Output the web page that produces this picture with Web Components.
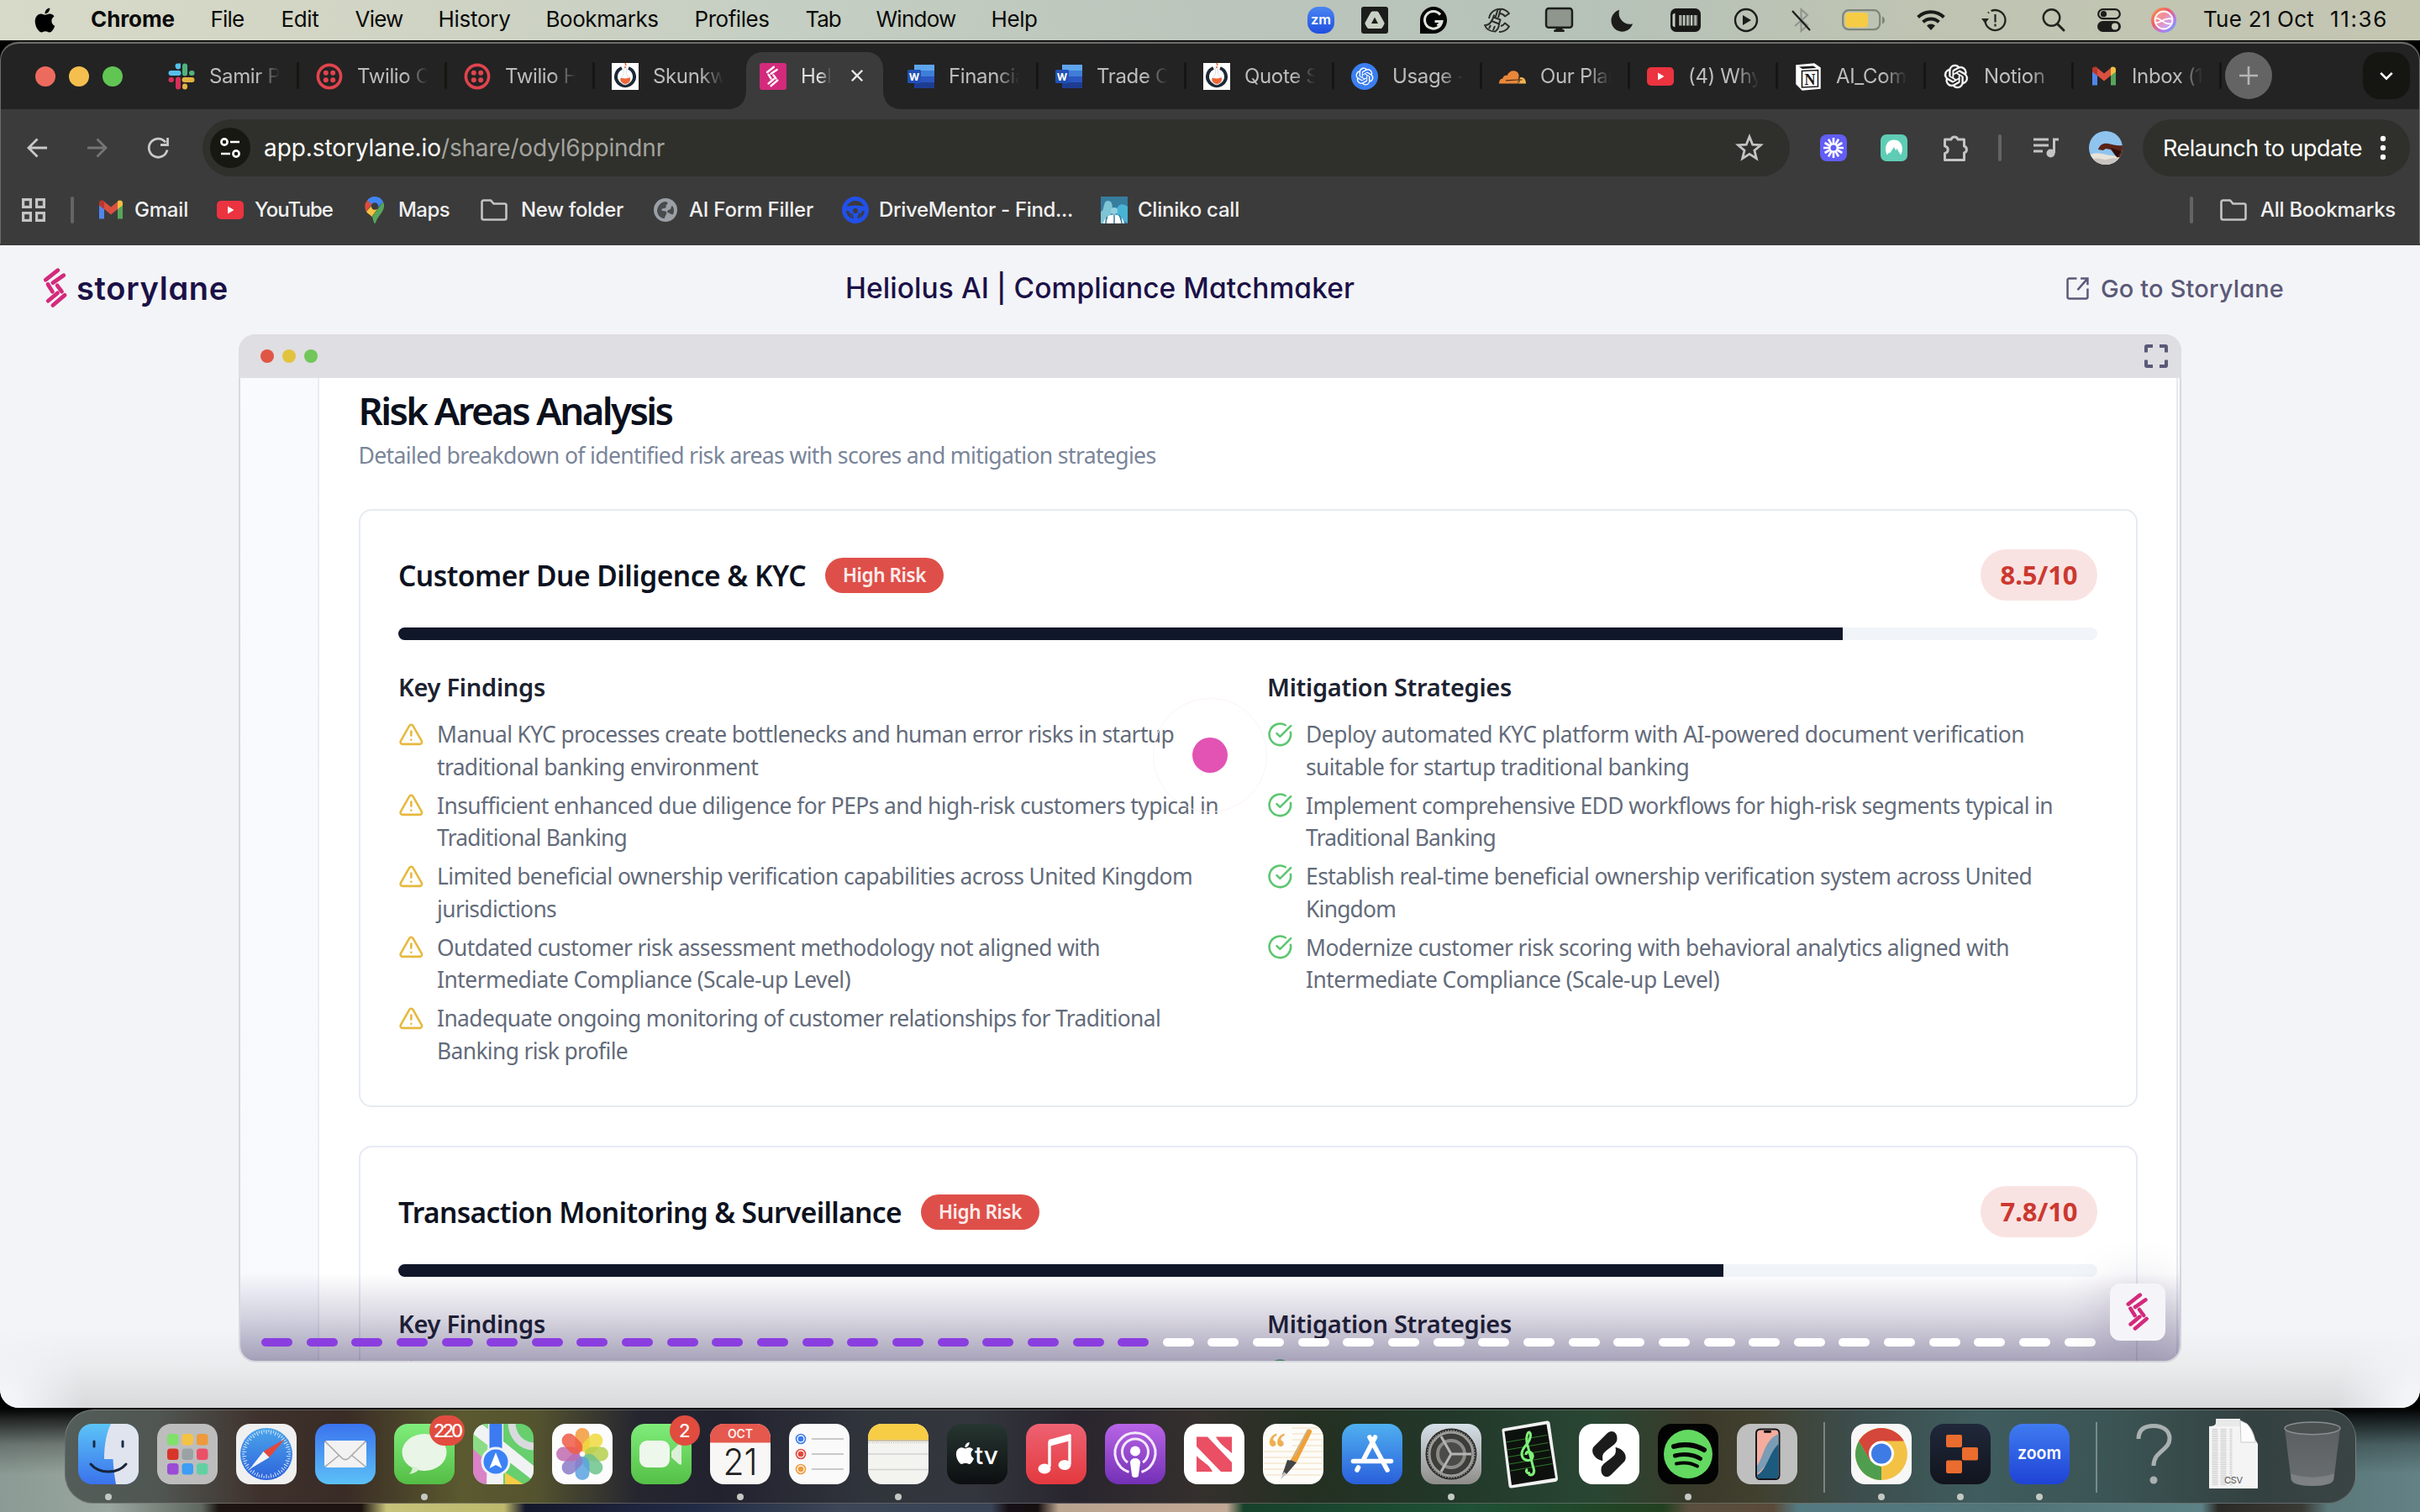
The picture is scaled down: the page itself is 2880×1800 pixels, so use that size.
<!DOCTYPE html>
<html lang="en">
<head>
<meta charset="utf-8">
<title>Heliolus AI | Compliance Matchmaker</title>
<style>
html,body{margin:0;padding:0;width:2880px;height:1800px;overflow:hidden;background:#0b0c0b}
</style>
</head>
<body>
<mac-desktop></mac-desktop>
<script>
const rr=(fill,extra='')=>`<rect x="0" y="0" width="72" height="72" rx="16.5" fill="${fill}" ${extra}/>`;
const lg=(id,a,b)=>`<defs><linearGradient id="${id}" x1="0" y1="0" x2="0" y2="1"><stop offset="0" stop-color="${a}"/><stop offset="1" stop-color="${b}"/></linearGradient></defs>`;
const APPLE='M12.152 6.896c-.948 0-2.415-1.078-3.96-1.04-2.04.027-3.91 1.183-4.961 3.014-2.117 3.675-.546 9.103 1.519 12.09 1.013 1.454 2.208 3.09 3.792 3.039 1.52-.065 2.09-.987 3.935-.987 1.831 0 2.35.987 3.96.948 1.637-.026 2.676-1.48 3.676-2.948 1.156-1.688 1.636-3.325 1.662-3.415-.039-.013-3.182-1.221-3.22-4.857-.026-3.04 2.48-4.494 2.597-4.559-1.429-2.09-3.623-2.324-4.39-2.376-2-.156-3.675 1.09-4.61 1.09zM15.53 3.83c.843-1.012 1.4-2.427 1.245-3.83-1.207.052-2.662.805-3.532 1.818-.78.896-1.454 2.338-1.273 3.714 1.338.104 2.715-.688 3.559-1.701';
const KNOT='M22.2819 9.8211a5.9847 5.9847 0 0 0-.5157-4.9108 6.0462 6.0462 0 0 0-6.5098-2.9A6.0651 6.0651 0 0 0 4.9807 4.1818a5.9847 5.9847 0 0 0-3.9977 2.9 6.0462 6.0462 0 0 0 .7427 7.0966 5.98 5.98 0 0 0 .511 4.9107 6.051 6.051 0 0 0 6.5146 2.9001A5.9847 5.9847 0 0 0 13.2599 24a6.0557 6.0557 0 0 0 5.7718-4.2058 5.9894 5.9894 0 0 0 3.9977-2.9001 6.0557 6.0557 0 0 0-.7475-7.0729zm-9.022 12.6081a4.4755 4.4755 0 0 1-2.8764-1.0408l.1419-.0804 4.7783-2.7582a.7948.7948 0 0 0 .3927-.6813v-6.7369l2.02 1.1686a.071.071 0 0 1 .038.052v5.5826a4.504 4.504 0 0 1-4.4945 4.4944zm-9.6607-4.1254a4.4708 4.4708 0 0 1-.5346-3.0137l.142.0852 4.783 2.7582a.7712.7712 0 0 0 .7806 0l5.8428-3.3685v2.3324a.0804.0804 0 0 1-.0332.0615L9.74 19.9502a4.4992 4.4992 0 0 1-6.1408-1.6464zM2.3408 7.8956a4.485 4.485 0 0 1 2.3655-1.9728V11.6a.7664.7664 0 0 0 .3879.6765l5.8144 3.3543-2.0201 1.1685a.0757.0757 0 0 1-.071 0l-4.8303-2.7865A4.504 4.504 0 0 1 2.3408 7.872zm16.5963 3.8558L13.1038 8.364 15.1192 7.2a.0757.0757 0 0 1 .071 0l4.8303 2.7913a4.4944 4.4944 0 0 1-.6765 8.1042v-5.6772a.79.79 0 0 0-.407-.667zm2.0107-3.0231l-.142-.0852-4.7735-2.7818a.7759.7759 0 0 0-.7854 0L9.409 9.2297V6.8974a.0662.0662 0 0 1 .0284-.0615l4.8303-2.7866a4.4992 4.4992 0 0 1 6.6802 4.66zM8.3065 12.863l-2.02-1.1638a.0804.0804 0 0 1-.038-.0567V6.0742a4.4992 4.4992 0 0 1 7.3757-3.4537l-.142.0805L8.704 5.459a.7948.7948 0 0 0-.3927.6813zm1.0976-2.3654l2.602-1.4998 2.6069 1.4998v2.9994l-2.5974 1.4997-2.6067-1.4997Z';
const slStrokes='<path d="M16.8 2.6 2.8 13.6M23.4 8.4 11 17M5.4 18.6l5.2 8.4M16 20l5.2 7M16.4 28.6 5.6 37.6M24.6 31 11 42.6"/>';
const ring=(n,f)=>Array.from({length:n},(_,i)=>f(i*360/n,i)).join('');

/* name: [viewBox, markup] */
const ICONS={
 apple:['0 0 24 24',`<path d="${APPLE}" fill="#000"/>`],
 zm:['0 0 32 32',`${lg('g','#4a86f2','#1f4fe0')}<rect width="32" height="32" rx="13" fill="url(#g)"/><text x="16" y="21" text-anchor="middle" font-family="Inter" font-weight="600" font-size="15.5" textLength="24" lengthAdjust="spacingAndGlyphs" fill="#fff">zm</text>`],
 drive:['0 0 32 32','<rect width="32" height="32" rx="3" fill="#1c1d1b"/><path fill-rule="evenodd" d="M13 5.500h6l1.500 1L27.500 19v1.500L25 25l-1.500 1h-15L7 25l-2.500-4.500V19L11.500 6.500zM16 12.500l-4 7.500h8z" fill="#c9d1c6"/>'],
 gram:['0 0 32 32','<path d="M16 0a16 16 0 1 1 0 32H0V16A16 16 0 0 1 16 0z" fill="#050505"/><path d="M24 9.500A10.300 10.300 0 1 0 26 17.500h-8.500" fill="none" stroke="#dfe4dc" stroke-width="3"/><path d="M20.500 22.500l5.500-5" fill="none" stroke="#dfe4dc" stroke-width="2.500"/>'],
 squig:['0 0 32 32','<g fill="none" stroke="#2b2d2a" stroke-width="2" stroke-linejoin="round"><path d="M6 14A13.500 13.500 0 0 1 30 8l-5 3.500a8 8 0 0 0-6-3.500"/><path d="M12.500 9.500A8 8 0 0 0 11 13"/><path d="M20 2.500l-3 10.500"/><path d="M17 2l-3.500 11"/><path d="M11.500 12.500l8 3-1.500 5-9-3.500z"/><path d="M9 17c-2 4-5 5-8 5 2 5 6 7.500 12.500 7.500 3-2.500 4.500-5.500 4.500-9"/><path d="M8 22l-2 4M13 23l-2 5"/><path d="M20 23a8 8 0 0 0 5-3.500l5 4A14 14 0 0 1 18 30"/></g>'],
 display:['0 0 32 32','<rect x="1" y="3" width="30" height="22" rx="3" fill="#8f968e" stroke="#1d1f1c" stroke-width="2.400"/><path d="M12 25h8v2.500h2V30H10v-2.500h2z" fill="#1d1f1c"/>'],
 moon:['0 0 32 32','<path d="M13 3A14 14 0 1 0 30 20.500 14 14 0 0 1 13 3z" fill="#1c1d1b"/>'],
 ram:['0 0 36 28','<rect width="36" height="28" rx="6.500" fill="#181917"/><path d="M2.500 7.500q2-2.500 3-1.500v16q-1 1-3-1.500z" fill="#c6cdc2"/><g stroke="#c6cdc2" stroke-width="2.200"><path d="M11.500 8v12.500M16 8v12.500M20.500 8v12.500M25 8v12.500M29.500 8v12.500"/></g><g stroke="#7d827a" stroke-width="1"><path d="M13.500 8v12.500M18 8v12.500M22.500 8v12.500M27 8v12.500M31.500 8v12.500"/></g>'],
 play:['0 0 32 32','<circle cx="16" cy="16" r="13" fill="none" stroke="#1c1d1b" stroke-width="2.400"/><path d="M12 10v12l10-6z" fill="#1c1d1b"/>'],
 bt:['0 0 32 32','<path d="M8 9l15 13-7.500 7V3L23 10 8 23" fill="none" stroke="#8d948b" stroke-width="2"/><path d="M5 5l21 23" stroke="#1c1d1b" stroke-width="2.200"/>'],
 batt:['0 0 52 26','<rect x="1.200" y="1.200" width="44" height="23" rx="7" fill="none" stroke="#7d8478" stroke-width="2.200"/><rect x="4" y="4" width="27" height="17.500" rx="4" fill="#f7cc45"/><path d="M48 8.500c4 1.500 4 7.500 0 9z" fill="#7d8478"/>'],
 wifi:['0 0 34 26','<g fill="none" stroke="#1a1b19" stroke-width="4"><path d="M1.600 9.500a22 22 0 0 1 30.800 0"/><path d="M7.600 15.200a13.500 13.500 0 0 1 18.800 0"/></g><path d="M17 25l-5-5.500a7.500 7.500 0 0 1 10 0z" fill="#1a1b19"/>'],
 tm:['0 0 32 32','<path d="M5.500 17A12 12 0 1 0 9 7.500" fill="none" stroke="#23241f" stroke-width="2.300" stroke-dasharray="60 3 3 3"/><path d="M1 14h9l-4.500 6z" fill="#23241f"/><path d="M17.500 9v9.500M17.500 20.500v3" stroke="#23241f" stroke-width="2.200"/>'],
 search:['0 0 32 32','<circle cx="13.500" cy="13" r="9.800" fill="none" stroke="#23241f" stroke-width="2.400"/><path d="M20.500 20.500L28 28" stroke="#23241f" stroke-width="3" stroke-linecap="round"/>'],
 cc:['0 0 28 28','<rect x="1.200" y="1.200" width="25.600" height="11" rx="5.500" fill="none" stroke="#1c1d1b" stroke-width="2.200"/><circle cx="7.500" cy="6.700" r="3.600" fill="#1c1d1b"/><rect y="15" width="28" height="13" rx="6.500" fill="#1c1d1b"/><circle cx="21" cy="21.500" r="4" fill="#c6cab8"/>'],
 siri:['0 0 30 30','<defs><linearGradient id="s" x1="0" y1="0" x2="1" y2="1"><stop offset="0" stop-color="#f6a13a"/><stop offset=".4" stop-color="#ee5a6f"/><stop offset=".7" stop-color="#b47cf0"/><stop offset="1" stop-color="#3fb4f5"/></linearGradient></defs><circle cx="15" cy="15" r="15" fill="url(#s)"/><circle cx="15" cy="15" r="10.500" fill="#fff" fill-opacity=".3" stroke="#fff" stroke-width="1.800"/><path d="M5 18c5 2 12-8 20-4M5 13c5-3 10 9 19 6" fill="none" stroke="#fff" stroke-width="1.800"/>'],
 slack:['0 0 32 32','<g stroke-width="6" stroke-linecap="round"><path d="M3.500 12h9M11.500 3.500h.5v1" stroke="#56c0ec"/><path d="M20 3.500v9M28.500 12h-.5" stroke="#4fb37f"/><path d="M19.500 20h9M20 28.500v-1" stroke="#e3b341"/><path d="M12 19.500v9M3.500 20h.5" stroke="#d72f5c"/></g>'],
 twilio:['0 0 32 32','<circle cx="16" cy="16" r="13.600" fill="none" stroke="#e0444e" stroke-width="3.600"/><g fill="#e0444e"><circle cx="11.800" cy="11.800" r="3"/><circle cx="20.200" cy="11.800" r="3"/><circle cx="11.800" cy="20.200" r="3"/><circle cx="20.200" cy="20.200" r="3"/></g>'],
 skunk:['0 0 32 32','<rect width="32" height="32" fill="#fff"/><path d="M12 6a11 11 0 1 0 8 0" fill="none" stroke="#1c2836" stroke-width="4"/><path d="M14.500 6h3v7l3.500 5a5.500 5.500 0 1 1-10 0l3.500-5z" fill="#fff" stroke="#dfe2e6"/><path d="M10.300 18.500c3-1.500 6 1.500 11.400-1.500a5.900 5.900 0 1 1-11.400 1.500z" fill="#ec6737"/><path d="M16 0l1 3M15 5h2" stroke="#ec6737" stroke-width="1.500"/>'],
 story:['0 0 32 32',`<rect width="32" height="32" rx="3" fill="#d42a7c"/><g transform="translate(7.500 3.300) scale(.56)" stroke="#fff" stroke-width="4.400" stroke-linecap="round" fill="none">${slStrokes}</g>`],
 word:['0 0 32 32','<path d="M8 2h24v8H8z" fill="#5ea5ec"/><path d="M8 9h24v7H8z" fill="#3f7ed8"/><path d="M8 16h24v7H8z" fill="#2a56c0"/><path d="M8 23h24v7H8z" fill="#1d3c91"/><rect y="8" width="16" height="16" rx="1.500" fill="#2150b5"/><text x="8" y="20.500" text-anchor="middle" font-family="Inter" font-weight="700" font-size="12" fill="#fff">W</text>'],
 usage:['0 0 32 32',`<circle cx="16" cy="16" r="16" fill="#3b7ef0"/><path transform="translate(5.500 5.500) scale(.875)" d="${KNOT}" fill="#fff"/>`],
 knot:['0 0 24 24',`<path transform="translate(1.500 1.500) scale(.875)" d="${KNOT}" fill="#fff" stroke="#fff" stroke-width=".4"/>`],
 cloud:['0 0 32 32','<path d="M0 24.500c0-4 2-6 4.500-6 0-3 3-4.500 5-3.500 2-5 6-6.500 9.500-5.500 3.500 1 5 4 4.500 7l-1.500 8z" fill="#e9873a"/><path d="M22.500 24.500c0-5 1.500-7.500 4-7.500 3.500 0 5.500 3.500 5.500 7.500z" fill="#f3b254"/><path d="M8 20.800l14-.8M24 16.500v7M20.500 20h7" stroke="#4a2c12" stroke-width="1.200"/>'],
 yt:['0 0 32 32','<rect y="5" width="32" height="22" rx="5" fill="#ec3340"/><path d="M13 11.500v9l7.500-4.500z" fill="#fff"/>'],
 notion:['0 0 32 32','<path d="M2 3l21-2 7 5v24l-21 2-7-7z" fill="#fff" stroke="#fff" stroke-width="1.500"/><path d="M5 4.500l17-1 3.500 2.500-16.500 1z" fill="#191919"/><path d="M8.500 9.500l19-1v19.500l-19 1z" fill="#fff" stroke="#191919" stroke-width="1.600"/><text x="18" y="26" text-anchor="middle" font-family="Liberation Serif" font-weight="700" font-size="18" fill="#191919">N</text>'],
 gmail:['0 0 32 32','<path d="M2 8v18.500h6V12z" fill="#4f86ec"/><path d="M30 8v18.500h-6V12z" fill="#58a55c"/><path d="M2 8c0-3 3.500-4 5.500-2.500L16 12.500l8.500-7L24 15l-8 6.500L2 10z" fill="#d9503f"/><path d="M2 7.500c0-2.500 3.500-4 6-2V15L2 10.500z" fill="#b9382f"/><path d="M30 7.500c0-2.500-3.500-4-6-2V15l6-4.500z" fill="#f1bf42"/>'],
 maps:['0 0 24 32','<path d="M12 0a11.500 11.500 0 0 1 10 6L12 18 3 4.500A11.500 11.500 0 0 1 12 0z" fill="#4285f4"/><path d="M3 4.500L8.500 9 2 18A11.500 11.500 0 0 1 3 4.500z" fill="#dd4b3e"/><path d="M22 6c3 7-1 12-4 16-3 4-4 6-5 9.500-1 .8-2 0-2.200-1L9 24l13-18z" fill="#57a65a"/><path d="M2 18l6-7 7 4-6.500 9C6 21 3 20 2 18z" fill="#f5c143"/><circle cx="12" cy="11.500" r="4.200" fill="#3b3b3b"/>'],
 folder:['0 0 32 26','<path d="M3.500 1.500h8.500l3.500 4H28.500a2 2 0 0 1 2 2V22.500a2 2 0 0 1-2 2H3.500a2 2 0 0 1-2-2V3.500a2 2 0 0 1 2-2z" fill="none" stroke="#c4c4c4" stroke-width="2.600"/>'],
 globe:['0 0 28 28','<circle cx="14" cy="14" r="14" fill="#9aa0a6"/><path d="M13 4c5 0 4 3 2 4-1 1 1 4-3 4-3 0-4 3-1 3s5 1 4 4c-1 2-2 3-2 5-6 0-9-5-9-10 1-5 4-9 9-10zM22 9c3 3 2 8 1 10-3 1-4-2-7-2 0-3 2-3 4-4 1-1 0-3 2-4z" fill="#3b3b3b" opacity=".85"/>'],
 wheel:['0 0 32 32','<circle cx="16" cy="16" r="13.500" fill="none" stroke="#2250e8" stroke-width="5"/><path d="M4 12c8-2 16-2 24 0v5c-5-1-6 3-7 11H11C10 20 9 16 4 17z" fill="#2250e8"/><circle cx="16" cy="17" r="3" fill="#3b3b3b"/><path d="M11 20l2 6M21 20l-2 6" stroke="#3b3b3b" stroke-width="2"/>'],
 cliniko:['0 0 32 32','<rect width="32" height="32" fill="#377d9e"/><path d="M0 32V18c5-1 2-12 8-13 8 0 5 10 6 12l-6 15z" fill="#7ec5d6"/><path d="M32 32V12c-5-4-10-4-13 2v10z" fill="#49b3d6"/><path d="M3 32c2-13 22-15 25 0z" fill="#fff"/><path d="M16 22v10M22 22c2 3 3 6 3 10M8 24c-2 2-2 5-2 8" stroke="#377d9e" stroke-width="1.500"/><circle cx="16" cy="17" r="4" fill="#8fd1e0"/>'],
 apps:['0 0 28 28','<g fill="none" stroke="#c4c4c4" stroke-width="3.200"><rect x="1.600" y="1.600" width="8.800" height="8.800"/><rect x="17.600" y="1.600" width="8.800" height="8.800"/><rect x="1.600" y="17.600" width="8.800" height="8.800"/><rect x="17.600" y="17.600" width="8.800" height="8.800"/></g>'],
 back:['0 0 24 24','<path d="M24 12H2M12.500 1.500L2 12l10.500 10.500" fill="none" stroke="#c9c9c9" stroke-width="2.800"/>'],
 fwd:['0 0 24 24','<path d="M0 12h22M11.500 1.500L22 12 11.500 22.500" fill="none" stroke="#757575" stroke-width="2.800"/>'],
 reload:['0 0 26 26','<path d="M24 15.500A11 11 0 1 1 22 6.500" fill="none" stroke="#c9c9c9" stroke-width="2.800"/><path d="M24.500 1v8.500H16" fill="none" stroke="#c9c9c9" stroke-width="2.800"/>'],
 tune:['0 0 24 24','<g fill="none" stroke="#fff" stroke-width="2.600"><circle cx="5" cy="5" r="3.600"/><path d="M12 5h11"/><circle cx="19" cy="19" r="3.600"/><path d="M1 19h11"/></g>'],
 star:['0 0 32 32','<path d="M16 3.500l3.500 8.800 9.200.6-7.100 6 2.300 9.100-7.900-5-7.900 5 2.300-9.100-7.100-6 9.200-.6z" fill="none" stroke="#c4c4c4" stroke-width="2.600"/>'],
 loom:['0 0 32 32',`<rect width="32" height="32" rx="8" fill="#625df5"/><g stroke="#fff" stroke-width="2.600">${ring(12,a=>`<path d="M16 4v7.500" transform="rotate(${a} 16 16)"/>`)}</g><circle cx="16" cy="16" r="4.600" fill="none" stroke="#fff" stroke-width="2.200"/>`],
 nord:['0 0 32 32','<rect width="32" height="32" rx="7" fill="#5fcdb5"/><path d="M8 24.500C4 18 6 6.500 16 6.500S28 18 24 24.500l-4.500-7.500-1.500 2-2-4-5 7.500-1-1z" fill="#fff"/>'],
 puzzle:['0 0 34 34','<path d="M4.500 7H12a4.200 4.200 0 0 1 8 0h7.500v8a4.200 4.200 0 0 1 0 8v8.500H4.500V23.500c5-1 5-7.500 0-8.500z" fill="none" stroke="#c4c4c4" stroke-width="3" stroke-linejoin="round"/>'],
 queue:['0 0 32 24','<path d="M1 2h18M1 9h18M1 16h11" stroke="#c4c4c4" stroke-width="3"/><path d="M25.500 18V2H31" fill="none" stroke="#c4c4c4" stroke-width="3"/><circle cx="21.500" cy="18.500" r="5" fill="#c4c4c4"/>'],
 avatar:['0 0 40 40','<defs><clipPath id="c"><circle cx="20" cy="20" r="20"/></clipPath></defs><g clip-path="url(#c)"><rect width="40" height="40" fill="#8fc4ee"/><path d="M0 29c6-4 12-3 20-1s14 2 20-1v13H0z" fill="#e8e2da"/><path d="M4 34c8-4 12 2 20-1 6-2 10 1 16-1v8H4z" fill="#c9c4c0"/><path d="M11 22c2-6 6-8 12-7 6 1 10 3 17 2v16l-8-3-6-8-6-1-3 2z" fill="#5a2216"/><path d="M26 20l8 12 4-8z" fill="#2a0f0c"/></g>'],
 dots:['0 0 8 30','<g fill="#fff"><circle cx="4" cy="4" r="3.200"/><circle cx="4" cy="15" r="3.200"/><circle cx="4" cy="26" r="3.200"/></g>'],
 chev:['0 0 20 12','<path d="M2.500 2L10 9.500 17.500 2" fill="none" stroke="#fff" stroke-width="3"/>'],
 plus:['0 0 22 22','<path d="M11 0v22M0 11h22" stroke="#b5b5b5" stroke-width="2.600"/>'],
 x:['0 0 18 18','<path d="M2 2l14 14M16 2L2 16" stroke="#e8e8e8" stroke-width="2.600"/>'],
 logo:['0 0 28 46',`<g stroke="#d42a7c" stroke-width="4.600" stroke-linecap="round" fill="none">${slStrokes}</g>`],
 ext:['0 0 26 26','<g fill="none" stroke="#5b5978" stroke-width="2.400"><path d="M12 1.500H3.200A1.700 1.700 0 0 0 1.500 3.200V22.800a1.700 1.700 0 0 0 1.700 1.700H22.800a1.700 1.700 0 0 0 1.700-1.700V13M16.500 1.500h8V9M24 2L13 14.500"/></g>'],
 full:['0 0 28 28','<path d="M2 9.500V3a1 1 0 0 1 1-1H10M18 2h7a1 1 0 0 1 1 1v6.500M26 18.500V25a1 1 0 0 1-1 1h-7M10 26H3a1 1 0 0 1-1-1v-6.500" fill="none" stroke="#5b5978" stroke-width="4"/>'],
 warn:['0 0 24 24','<g fill="none" stroke="#e6b93e" stroke-width="2" stroke-linecap="round" stroke-linejoin="round"><path d="m21.730 18-8-14a2 2 0 0 0-3.480 0l-8 14A2 2 0 0 0 4 21h16a2 2 0 0 0 1.730-3"/><path d="M12 9v4"/><path d="M12 17h.01"/></g>'],
 check:['0 0 24 24','<g fill="none" stroke="#5cc670" stroke-width="2" stroke-linecap="round" stroke-linejoin="round"><path d="M21.801 10A10 10 0 1 1 17 3.335"/><path d="m9 11 3 3L22 4"/></g>'],

 d_finder:['0 0 72 72',`${lg('a','#5cc4f7','#3a72ec')}${rr('url(#a)')}<path d="M39 0H55.500A16.500 16.500 0 0 1 72 16.500V55.500A16.500 16.500 0 0 1 55.500 72H45c-1.500-8-3-18-3.500-30H31c0-18 3-32 8-42z" fill="#dfe4ee"/><path d="M19 21v6M53 21v6" stroke="#1b2b44" stroke-width="3" stroke-linecap="round"/><path d="M15 48c10 12 32 12 42 0" fill="none" stroke="#17243a" stroke-width="3" stroke-linecap="round"/>`],
 d_launch:['0 0 72 72',rr('#bdbdbd')+['#7fe06b','#f5c343','#ee9a3a','#d8352a','#9aa2a6','#ec5068','#9b4bd6','#3e9df5','#62cfa3'].map((c,i)=>`<rect x="${12+17.500*(i%3)}" y="${12+17.500*Math.floor(i/3)}" width="13.500" height="13.500" rx="3.500" fill="${c}"/>`).join('')],
 d_safari:['0 0 72 72',`${lg('a','#4ba5ea','#2d62dc')}${rr('#f0f0f0')}<circle cx="36" cy="36" r="31" fill="url(#a)"/><g stroke="#d6e8fa" stroke-width="1">${ring(60,(a,i)=>`<path d="M36 7v${i%2?3:5}" transform="rotate(${a} 36 36)"/>`)}</g><path d="M58 18L39.500 40 32.500 33z" fill="#e6473b"/><path d="M16 54l16.500-21 7 7z" fill="#f5f5f5"/>`],
 d_mail:['0 0 72 72',`${lg('a','#3b73ee','#5cc1f8')}${rr('url(#a)')}<rect x="11" y="20" width="50" height="32" rx="4" fill="#f2f2f2"/><path d="M12 21l20 20c3 2.500 5 2.500 8 0l20-20M12 51l17-14M60 51L43 37" fill="none" stroke="#a9a9a9" stroke-width="1.600"/>`],
 d_msg:['0 0 72 72',`${lg('a','#80ee7c','#54bd45')}${rr('url(#a)')}<ellipse cx="36" cy="34" rx="26.500" ry="22" fill="#e9f5e6"/><path d="M22 50c0 5-2 8-4 9.500 5 0 9-2 12-6z" fill="#d9efd5"/>`],
 d_maps:['0 0 72 72',`<defs><clipPath id="c"><rect width="72" height="72" rx="16.500"/></clipPath></defs><g clip-path="url(#c)"><rect width="72" height="72" fill="#67cf6e"/><path d="M0 0h18v50L0 30z" fill="#8bdc84"/><path d="M0 12l72 56v-18L10 0H0z" fill="#f1f2f4"/><path d="M0 30l22 20v22H0z" fill="#da82c6"/><path d="M18 0h18v72H16z" fill="#f1f2f4"/><path d="M19.500 0h15v34h-15z" fill="#3b7af0"/><path d="M46 0c1 14 10 26 26 27" fill="none" stroke="#d9dade" stroke-width="9"/><path d="M38 72V58l22 14z" fill="#f6cb45"/><circle cx="27" cy="45" r="16" fill="#3b82f6" stroke="#eef2f8" stroke-width="3"/><path d="M27 34l7.500 19-7.500-4-7.500 4z" fill="#fff"/></g>`],
 d_photos:['0 0 72 72',rr('#fcfcfc')+['#f29a38','#efd93e','#b5cf4c','#6cc38c','#5aa2df','#8a7bc8','#c06bb0','#ee5a45'].map((c,i)=>`<rect x="27.500" y="5" width="17" height="28" rx="8.500" fill="${c}" opacity=".85" transform="rotate(${i*45} 36 36)"/>`).join('')],
 d_ft:['0 0 72 72',`${lg('a','#7fec7a','#55c046')}${rr('url(#a)')}<rect x="10" y="20" width="36" height="32" rx="9" fill="#eef7ec"/><path d="M48 33l9-9q3-1.500 3 1v22q0 3-3 1l-9-8z" fill="#dcefd8"/>`],
 d_cal:['0 0 72 72','<defs><clipPath id="c"><rect width="72" height="72" rx="16.500"/></clipPath></defs><g clip-path="url(#c)"><rect width="72" height="72" fill="#f8f7f5"/><rect width="72" height="22.500" fill="#e5584d"/></g><text x="36" y="17" text-anchor="middle" font-family="Inter" font-weight="600" font-size="14" textLength="30" fill="#fdeeec">OCT</text><text x="36" y="61" text-anchor="middle" font-family="Inter" font-weight="300" font-size="44" textLength="41" lengthAdjust="spacingAndGlyphs" fill="#222">21</text>'],
 d_rem:['0 0 72 72',rr('#fafafa')+['#3b7bf0','#e2473c','#ee9a3a'].map((c,i)=>`<circle cx="14" cy="${18+18*i}" r="5.500" fill="none" stroke="${c}" stroke-width="1.600"/><circle cx="14" cy="${18+18*i}" r="3.300" fill="${c}"/><path d="M27 ${18+18*i}h38" stroke="#b8b8b8" stroke-width="1.600"/>`).join('')],
 d_notes:['0 0 72 72','<defs><clipPath id="c"><rect width="72" height="72" rx="16.500"/></clipPath></defs><g clip-path="url(#c)"><rect width="72" height="72" fill="#f3f3f0"/><rect width="72" height="19" fill="#f7cd46"/><path d="M0 20h72" stroke="#c0b089" stroke-width="1.500"/><path d="M0 22.500h72" stroke="#b0b0b0" stroke-dasharray="1 1.500"/><path d="M0 36h72M0 54.500h72" stroke="#d2d2d0" stroke-width="1.600"/></g>'],
 d_tv:['0 0 72 72',`${lg('a','#263631','#0c0e10')}${rr('url(#a)')}<path transform="translate(8.500 22) scale(1.080)" d="${APPLE}" fill="#fff"/><text x="33" y="48" font-family="Inter" font-weight="500" font-size="29" textLength="28" lengthAdjust="spacingAndGlyphs" fill="#fff">tv</text>`],
 d_music:['0 0 72 72',`${lg('a','#ed6272','#e4393f')}${rr('url(#a)')}<path d="M28 51V22l24-7v33" fill="none" stroke="#fff" stroke-width="3.400"/><path d="M27 19l26-7v8l-26 7z" fill="#fff"/><ellipse cx="22" cy="53.500" rx="7.500" ry="6" fill="#fff"/><ellipse cx="46" cy="49" rx="7.500" ry="6" fill="#fff"/>`],
 d_pod:['0 0 72 72',`${lg('a','#b864e6','#7330b6')}${rr('url(#a)')}<g fill="none" stroke="#f4e9fb" stroke-width="3"><path d="M28.500 57.500a24 24 0 1 1 15 0"/><path d="M27 46a15.500 15.500 0 1 1 18 0"/></g><circle cx="36" cy="32.500" r="6" fill="#fff"/><path d="M30 46a6 5 0 0 1 12 0l-2 15a4 3 0 0 1-8 0z" fill="#fff"/>`],
 d_news:['0 0 72 72',rr('#fff')+'<path d="M15 15.500h13L57 46v11H44L15 27z" fill="#ea4f64"/><path d="M38 15.500h19V35C52 30 44 26 38 15.500zM15 38v19h19C30 48 20 44 15 38z" fill="#ea4f64"/>'],
 d_pages:['0 0 72 72',rr('#fdfcf9')+'<path d="M35 5h30M35 12h35M35 19h36M35 26h36M1 33h70M1 40h70M1 47h70M1 54h70M4 61h64" stroke="#f1dcb8" stroke-width="1.200"/><text x="6" y="45" font-family="Liberation Serif" font-weight="700" font-size="50" textLength="21" lengthAdjust="spacingAndGlyphs" fill="#eeb04e">“</text><path d="M52 8c2-3 7-1 6 2L40 46l-7-3z" fill="#f0a136"/><path d="M52 8l2-2L39 37l-3 4z" fill="#a9c4d4"/><path d="M35 44l-6-1-4 12-2 5 3-1z" fill="#444"/><path d="M40 46l-7-3-8 14 3 3z" fill="#444"/><path d="M25 57l-4 9 7-6z" fill="#b9c0c8"/>'],
 d_store:['0 0 72 72',`${lg('a','#4fb0f0','#2a5fdb')}${rr('url(#a)')}<g stroke="#fff" stroke-width="5.600" stroke-linecap="round" fill="none"><path d="M39.500 16L26 42M33 16l21 39"/><path d="M13.500 44.500h45M19.500 52l-1.500 3"/></g>`],
 d_set:['0 0 72 72',`${lg('a','#d5e0e8','#8f8d8a')}${rr('url(#a)')}<circle cx="36" cy="36" r="30.500" fill="#2b2b28"/><circle cx="36" cy="36" r="26" fill="#3d3d3a" stroke="#a2a2a0" stroke-width="3"/><g stroke="#8b8b89" stroke-width="1.400">${ring(54,a=>`<path d="M36 7v3.500" transform="rotate(${a} 36 36)"/>`)}</g><circle cx="36" cy="36" r="16" fill="#4b4b48" stroke="#8b8b88" stroke-width="4"/><g stroke="#b5b5b3" stroke-width="3"><path d="M36 36h24M36 36L24 15M36 36L24 57"/></g>`],
 d_treble:['0 0 72 80','<path d="M2.500 12Q2 10 4 9.500L56 .5Q59 0 59.500 3L69 69Q69 72 66 73L14 80.500Q11 81 10.500 78z" fill="#f2f2f2"/><path d="M5.500 13L55.500 4.500 66 68.500 14 77z" fill="#0d110d"/><path d="M7 26l49-8.500M8.500 35l49-8.500M10 43.500l49-8.500M11 52l50-8.500M12.500 60l50-8.500" stroke="#2f7a2a" stroke-width="1"/><path d="M36 62c-4 2-6-2-3-4M34 64c5 3 8-2 6-7L32 26c-1-7 1-12 3-12 3 2 1 9-2 13-5 6-9 11-6 17 4 6 14 4 12-3-2-5-8-5-8 0" fill="none" stroke="#7ff07a" stroke-width="3"/>'],
 d_s:['0 0 72 72',rr('#fff')+['','rotate(180 36 36)'].map(t=>`<path transform="${t}" d="M33.500 11.500C38 6.500 46 9 45.500 18 45.500 25 36 27.500 29.500 35 27.500 38 28 41 28.500 44 19 42.500 13.500 33.500 17.500 27.500z" fill="#1b1b1b"/>`).join('')],
 d_spot:['0 0 72 72',rr('#030303')+'<circle cx="36" cy="36" r="29" fill="#63d961"/><g fill="none" stroke="#050505" stroke-linecap="round"><path d="M19 27c12-4 26-2 36 4" stroke-width="6"/><path d="M20.500 38c10-3 22-1.500 30 3.500" stroke-width="5"/><path d="M22 47.500c9-2 18-1 25 3" stroke-width="4"/></g>'],
 d_phone:['0 0 72 72',rr('#bfbfbf')+'<rect x="22" y="5.500" width="29.500" height="61.500" rx="5.500" fill="#15181c"/><rect x="24" y="7.500" width="25.500" height="57.500" rx="4" fill="#f5ac9d"/><path d="M49.500 12v18L36 48l-12 12V50c8-10 8-30 25.500-38z" fill="#7a9db5"/><path d="M49.500 24v37a4 4 0 0 1-4 4H28a4 4 0 0 1-4-4c12-6 14-26 25.500-37z" fill="#1c5a7e"/><rect x="32" y="8" width="9" height="2.800" rx="1.400" fill="#000"/>'],
 d_chrome:['0 0 72 72',rr('#f7f7f7')+'<circle cx="36" cy="36" r="31" fill="#f3c245"/><path d="M9.200 20.500a31 31 0 0 1 53.600 0H36L22.500 44z" fill="#d5473b"/><path d="M9.200 20.500L22.600 43.800 36 51.500 36 67A31 31 0 0 1 9.200 20.500z" fill="#4f9e4f"/><path d="M36 67l13.400-23.200L36 51z" fill="#f3c245"/><circle cx="36" cy="35.500" r="15" fill="#fff"/><circle cx="36" cy="35.500" r="12" fill="#3f7be4"/>'],
 d_replit:['0 0 72 72',`${lg('a','#20283a','#11141d')}${rr('url(#a)')}<g fill="#ea6c2e"><rect x="19" y="13" width="19" height="15" rx="2"/><rect x="38" y="28" width="19" height="15.500" rx="2"/><rect x="19" y="43.500" width="19" height="15.500" rx="2"/></g>`],
 d_zoom:['0 0 72 72',`${lg('a','#3f7bf0','#1f43d6')}${rr('url(#a)')}<text x="36" y="42" text-anchor="middle" font-family="Inter" font-weight="600" font-size="21" textLength="52" lengthAdjust="spacingAndGlyphs" fill="#fff">zoom</text>`],
 d_help:['0 0 72 72','<g fill="none" stroke="#a9b0b0"><path d="M18 18C18 7 25 2.500 36 2.500c12 0 19 6 19 15C55 32 36 32 36 50" stroke-width="5"/></g><circle cx="36" cy="67" r="4.500" fill="#a9b0b0"/>'],
 d_csv:['0 0 72 84',`<path d="M7 9V83H65V30L52 8 44 6V0H15v5q0 4-8 4z" fill="#f4f4f4"/><path d="M15 9h29V1H15z" fill="#e9e9e9"/><path d="M44 2l1 26h17c-1-9-5-17-10-22z" fill="#fdfdfd" stroke="#c9c9c9" stroke-width="1"/><g stroke="#cfcfcf" stroke-width="7" stroke-dasharray="1.200 1"><path d="M14 12v67M24 12v67"/><path d="M33 12v67" stroke-width="3"/></g><text x="36" y="77" text-anchor="middle" font-family="Inter" font-size="11" textLength="22" fill="#555">CSV</text>`],
 d_trash:['0 0 72 80',`${lg('a','#5c6063','#6d7174')}<path d="M2 8l8 64q2 7 26 7t26-7L70 8z" fill="url(#a)" opacity=".95"/><ellipse cx="36" cy="8.500" rx="34" ry="7.500" fill="#4b5051" stroke="#8a8f91" stroke-width="1.500"/><path d="M10 70q2 9 26 9t26-9l.5-6q-26.500 9-53 0z" fill="#8e9294" opacity=".55"/>`]
};

class Base extends HTMLElement{
  constructor(){super();this.attachShadow({mode:'open'})}
  connectedCallback(){if(!this.done){this.done=true;this.shadowRoot.innerHTML=this.render();this.after&&this.after()}}
}
/* A flex row whose gaps come from a list of [start, width, markup]. */
const row=(from,items)=>{let at=from;return items.map(([x,w,h])=>{const m=x-at;at=x+w;return `<div class="cell" style="margin-left:${m.toFixed(1)}px;width:${w}px">${h}</div>`}).join('')};
const ic=(n,w,h=w)=>`<ui-icon name="${n}" w="${w}" h="${h}"></ui-icon>`;
const ft=(t,w)=>`<fit-text w="${w}">${t}</fit-text>`;
const rowCss='.row{display:flex;align-items:center}.cell{flex:none;display:flex;align-items:center;justify-content:flex-start}';

customElements.define('ui-icon',class extends Base{
  render(){const [vb,m]=ICONS[this.getAttribute('name')];const w=this.getAttribute('w'),h=this.getAttribute('h')||w;
    return `<style>:host{display:block;flex:none;line-height:0}svg{display:block;overflow:visible}</style><svg width="${w}" height="${h}" viewBox="${vb}">${m}</svg>`}
});
/* Single line of text, tracked to fill the width it is given. */
customElements.define('fit-text',class extends Base{
  render(){return `<style>:host{display:block;white-space:nowrap;flex:none}span{display:inline-block;white-space:nowrap}</style><span><slot></slot></span>`}
  after(){const s=this.shadowRoot.querySelector('span'),w=+this.getAttribute('w');this.style.width=w+'px';
    const n=s.getBoundingClientRect().width,c=this.textContent.length;if(w&&n)s.style.letterSpacing=((w-n)/c).toFixed(3)+'px'}
});
customElements.define('menu-bar',class extends Base{
  render(){const L=[['File',251,40],['Edit',335,45],['View',423,57],['History',522,86],['Bookmarks',650,134],['Profiles',827,89],['Tab',959,42],['Window',1043,95],['Help',1180,55]];
  return `<style>:host{display:block;height:48px;flex:none;background:linear-gradient(90deg,#d7d9c9 0,#d2d5c4 400px,#c6cfc3 900px,#bbc5bb 1450px,#b6c2b8 1900px,#bfc4b2 2300px,#c4c6b2 2880px);font:400 26px Inter,sans-serif;color:#0b0b0a}${rowCss}.row{height:45px}.row ui-icon{padding-top:2px}</style>
  <div class="row">${row(0,[[39,30,ic('apple',29,32)],[108,100,`<b style="font-weight:700">${ft('Chrome',100)}</b>`],...L.map(([t,x,w])=>[x-.5,w,ft(t,w)]),
  [1556,32,ic('zm',32)],[1620,32,ic('drive',32)],[1690,32,ic('gram',32)],[1766,32,ic('squig',32)],[1839,33,ic('display',33)],[1915,30,ic('moon',30)],[1988,36,ic('ram',36,28)],[2062,32,ic('play',32)],[2128,32,ic('bt',32)],[2192,52,ic('batt',52,26)],[2281,34,ic('wifi',34,26)],[2357,32,ic('tm',32)],[2428,32,ic('search',32)],[2496,28,ic('cc',28)],[2560,30,ic('siri',30)],[2622,132,ft('Tue 21 Oct',132)],[2773,69,ft('11:36',69)]])}</div>`}
});
customElements.define('browser-tab',class extends Base{
  render(){const a=this.hasAttribute('active'),ns=this.hasAttribute('nosep');
  return `<style>:host{display:block;width:176px;height:78px;flex:none;box-sizing:border-box}
  .t{display:flex;align-items:center;height:78px;padding-left:22px;box-sizing:border-box;position:relative}
  .l{margin:0 0 2px 17px;width:${a?37:86}px;overflow:hidden;font:400 24px Inter,sans-serif;letter-spacing:-.35px;white-space:nowrap;color:${a?'#dedede':'#bdbdbd'};-webkit-mask-image:linear-gradient(90deg,#000 ${a?62:66}%,transparent 98%);mask-image:linear-gradient(90deg,#000 ${a?62:66}%,transparent 98%)}
  .sep{position:absolute;right:-2px;top:22px;width:3px;height:32px;border-radius:2px;background:#151612}
  .bg{position:absolute;left:-18px;top:10px}.t>*:not(.bg):not(.sep){position:relative}
  .x{margin:0 0 1px 22px}.t ui-icon{margin-bottom:1px}</style><div class="t">${a?'<svg class="bg" width="212" height="68"><path d="M0 68c16 0 24-8 24-24V20C24 8 32 0 44 0h123c12 0 20 8 20 20v24c0 16 8 24 24 24z" fill="#3b3b3b"/></svg>':''}${ic(this.getAttribute('icon'),32)}<div class="l"><slot></slot></div>${a?`<div class="x">${ic('x',16)}</div>`:''}${ns?'':'<div class="sep"></div>'}</div>`}
});
customElements.define('tab-strip',class extends Base{
  render(){const T=[['slack','Samir P'],['twilio','Twilio C'],['twilio','Twilio H'],['skunk','Skunkw',1],['story','Heli',1,1],['word','Financia'],['word','Trade C'],['skunk','Quote S'],['usage','Usage -'],['cloud','Our Plan'],['yt','(4) Why'],['notion','AI_Com'],['knot','Notion'],['gmail','Inbox (1']];
  return `<style>:host{display:block;height:78px;background:#232323}.s{display:flex;align-items:center;height:78px}
  .d{width:24px;height:24px;border-radius:50%;margin-right:16px;flex:none}.lights{display:flex;margin-left:42px;width:136px;flex:none}
  .b{display:flex;align-items:center;justify-content:center;width:56px;height:56px;flex:none;margin-bottom:2px}</style>
  <div class="s"><div class="lights"><div class="d" style="background:#ed6a5e"></div><div class="d" style="background:#f5bf4f"></div><div class="d" style="background:#61c554"></div></div>
  ${T.map(([i,t,n,a])=>`<browser-tab icon="${i}" ${n?'nosep':''} ${a?'active':''}>${t}</browser-tab>`).join('')}
  <div class="b" style="border-radius:50%;background:#646464;margin-left:6px">${ic('plus',22)}</div><div class="b" style="border-radius:20px;background:#151612;margin-left:108px">${ic('chev',18,11)}</div></div>`}
});
customElements.define('tool-bar',class extends Base{
  render(){return `<style>:host{display:block;height:92px;background:#3b3b3b;font:400 28px Inter,sans-serif;color:#fff}${rowCss}.row{height:92px}
  .pill{height:68px;border-radius:34px;background:#2f302b;display:flex;align-items:center;flex:none;width:100%}.pill .cell{height:68px}
  .site{width:48px;height:48px;border-radius:50%;background:#171812;display:flex;align-items:center;justify-content:center}
  .v{width:4px;height:32px;border-radius:2px;background:#646464}.g{color:#a3a39f}</style>
  <div class="row">${row(0,[[32,24,ic('back',24)],[104,24,ic('fwd',24)],[175,26,ic('reload',26)],
  [241,1889,`<div class="pill">${row(241,[[250,48,`<div class="site">${ic('tune',24)}</div>`],[314,211,ft('app.storylane.io',211)],[525,266,`<div class="g">${ft('/share/odyl6ppindnr',266)}</div>`],[2065,34,ic('star',34)]])}</div>`],
  [2166,32,ic('loom',32)],[2238,32,ic('nord',32)],[2310,34,ic('puzzle',34)],[2378,4,'<div class="v"></div>'],[2419,32,ic('queue',32,24)],[2486,40,ic('avatar',40)],
  [2550,318,`<div class="pill" style="font-size:27px">${row(2550,[[2574,236,ft('Relaunch to update',237)],[2832,8,ic('dots',8,30)]])}</div>`]])}</div>`}
});
customElements.define('bookmarks-bar',class extends Base{
  render(){return `<style>:host{display:block;height:70px;background:#3b3b3b;font:500 24px Inter,sans-serif;color:#f0f0f0}${rowCss}.row{height:56px}.row fit-text{margin-top:-1px}.v{width:4px;height:32px;border-radius:2px;background:#646464}</style>
  <div class="row">${row(0,[[26,28,ic('apps',28)],[84,4,'<div class="v"></div>'],[116,32,ic('gmail',32)],[160,64,ft('Gmail',64)],[258,32,ic('yt',32)],[303,93,ft('YouTube',93)],[434,24,ic('maps',24,32)],[474,61,ft('Maps',61)],[572,32,ic('folder',32,26)],[620,122,ft('New folder',122)],[778,28,ic('globe',28)],[820,148,ft('AI Form Filler',148)],[1002,32,ic('wheel',32)],[1046,231,ft('DriveMentor - Find...',231)],[1310,32,ic('cliniko',32)],[1354,121,ft('Cliniko call',121)],[2606,4,'<div class="v"></div>'],[2642,32,ic('folder',32,26)],[2690,161,ft('All Bookmarks',161)]])}</div>`}
});
customElements.define('finding-item',class extends Base{
  render(){return `<style>:host{display:flex;gap:15.400px;font:400 26.400px/38.400px "Noto Sans",sans-serif;color:#636b7a}.i{padding-top:3.500px}</style><div class="i">${ic(this.getAttribute('icon'),30.700)}</div><div><slot></slot></div>`}
});
customElements.define('risk-card',class extends Base{
  render(){const g=n=>this.getAttribute(n);
  return `<style>:host{display:block;box-sizing:border-box;border:2px solid #e6ebf2;border-radius:15px;padding:46px 45.500px 46px;background:#fff;margin-bottom:46px;font-family:"Noto Sans",sans-serif}
  .h{display:flex;align-items:center;height:61.500px}.t{font-weight:600;font-size:33.500px;color:#0d1220;line-height:48px;padding-top:1px}
  .b{margin-left:23px;width:141px;height:42px;border-radius:21px;background:#df4f49;color:#fbecec;font-weight:600;font-size:22.500px;line-height:42px;display:flex;justify-content:center}
  .s{margin-left:auto;width:139px;height:61px;border-radius:31px;background:#f9e3e2;color:#cc3830;font-weight:700;font-size:31px;line-height:61px;display:flex;justify-content:center}
  .p{height:15.400px;border-radius:8px;background:#f1f5f9;margin:31px 0 32px;overflow:hidden}.p div{height:100%;background:#101729}
  .c{display:grid;grid-template-columns:1fr 1fr;gap:46px}.k{font-weight:600;font-size:29px;line-height:47px;color:#1c2230;margin-bottom:14.400px}.l{display:flex;flex-direction:column;gap:7.700px}</style>
  <div class="h"><div class="t">${ft(g('name').replace('&','&amp;'),g('tw'))}</div><div class="b">${ft('High Risk',99)}</div><div class="s">${ft(g('score')+'/10',92)}</div></div>
  <div class="p"><div style="width:${parseFloat(g('score'))*10}%"></div></div>
  <div class="c"><div><div class="k">${ft('Key Findings',175)}</div><div class="l"><slot name="findings"></slot></div></div><div><div class="k">${ft('Mitigation Strategies',291)}</div><div class="l"><slot name="strategies"></slot></div></div></div>`}
});
customElements.define('risk-report',class extends Base{
  render(){const F=[[['Manual KYC processes create bottlenecks and human error risks in startup',877],['traditional banking environment',382]],[['Insufficient enhanced due diligence for PEPs and high-risk customers typical in',930],['Traditional Banking',226]],[['Limited beneficial ownership verification capabilities across United Kingdom',899],['jurisdictions',142]],[['Outdated customer risk assessment methodology not aligned with',789],['Intermediate Compliance (Scale-up Level)',492]],[['Inadequate ongoing monitoring of customer relationships for Traditional',861],['Banking risk profile',227]]];
  const S=[[['Deploy automated KYC platform with AI-powered document verification',855],['suitable for startup traditional banking',456]],[['Implement comprehensive EDD workflows for high-risk segments typical in',889],['Traditional Banking',226]],[['Establish real-time beneficial ownership verification system across United',864],['Kingdom',107]],[['Modernize customer risk scoring with behavioral analytics aligned with',837],['Intermediate Compliance (Scale-up Level)',492]]];
  const li=(a,s,i)=>a.map(l=>`<finding-item slot="${s}" icon="${i}">${l.map(([t,w])=>ft(t,w)).join('')}</finding-item>`).join('');
  return `<style>:host{display:block;padding:8px 46.500px 0 46.500px;font-family:"Noto Sans",sans-serif}h1{margin:0;font-weight:600;font-size:45.500px;line-height:61px;color:#0b101c}.sub{font-size:26.600px;line-height:46px;color:#7a8599;margin-bottom:41px}</style>
  <h1>${ft('Risk Areas Analysis',373)}</h1><div class="sub">${ft('Detailed breakdown of identified risk areas with scores and mitigation strategies',949)}</div>
  <risk-card name="Customer Due Diligence &amp; KYC" tw="485" score="8.5">${li(F,'findings','warn')}${li(S,'strategies','check')}</risk-card>
  <risk-card name="Transaction Monitoring &amp; Surveillance" tw="599" score="7.8"><finding-item slot="findings" icon="warn"></finding-item><finding-item slot="strategies" icon="check"></finding-item></risk-card>`}
});
customElements.define('story-frame',class extends Base{
  render(){return `<style>:host{display:block;position:relative;box-sizing:border-box;width:2312px;height:1224px;border-radius:20px;overflow:hidden;background:#d9d9de;margin-left:284px}
  .bar{height:52px;background:#dfdee3;display:flex;align-items:center;padding:0 16px 0 26px}.bar i{width:16px;height:16px;border-radius:50%;margin-right:10px}.bar ui-icon{margin-left:auto}
  .body{height:1170px;margin:0 2px;border-radius:0 0 18px 18px;overflow:hidden;display:grid;grid-template-columns:94px 1fr 4px;background:#fff}
  .side{background:linear-gradient(#f8fafd,#f7f9fd);border-right:2px solid #e9edf4}.gut{background:#fafafd;border-left:2px solid #e8e9f1}.main{height:1170px;overflow:hidden}
  .shade{position:absolute;left:2px;right:2px;bottom:2px;height:104px;border-radius:0 0 18px 18px;background:linear-gradient(rgba(30,17,77,0),rgba(30,17,77,.17) 50%,rgba(30,17,77,.39))}
  .steps{position:absolute;left:27px;bottom:19px;width:2183px;display:flex;justify-content:space-between}.steps i{width:37px;height:10px;border-radius:5px;background:#fff}.steps i.on{background:#8b3ee0}
  .fab{position:absolute;left:2227px;top:1130px;width:66px;height:68px;border-radius:12px;background:#f5f5f9;display:flex;align-items:center;justify-content:center;box-shadow:0 4px 60px rgba(30,17,77,.2)}
  .hot{position:absolute;left:1088px;top:433px;width:134px;height:134px;border:1px solid #fdf3f7;border-radius:50%;display:flex;align-items:center;justify-content:center}.hot i{width:42px;height:42px;border-radius:50%;background:#e253b4}</style>
  <div class="bar"><i style="background:#df5646"></i><i style="background:#e2c33f"></i><i style="background:#72c65a"></i>${ic('full',28)}</div>
  <div class="body"><div class="side"></div><div class="main"><risk-report></risk-report></div><div class="gut"></div></div>
  <div class="shade"></div><div class="steps">${Array.from({length:41},(_,i)=>`<i class="${i<20?'on':''}"></i>`).join('')}</div>
  <div class="hot"><i></i></div><div class="fab">${ic('logo',28,46)}</div>`}
});
customElements.define('story-page',class extends Base{
  render(){return `<style>:host{display:block;height:1384px;background:radial-gradient(ellipse 100px 130px at 0 100%,#f3f4f7 20%,rgba(243,244,247,0)),radial-gradient(ellipse 100px 130px at 100% 100%,#f3f4f7 20%,rgba(243,244,247,0)),linear-gradient(#f3f4f7 1290px,#eaebed 1335px,#d8d9db)}${rowCss}.row{height:102px;margin-bottom:4px;font-family:Inter,sans-serif;font-feature-settings:"cv11";color:#1b1147}</style>
  <div class="row">${row(0,[[51,32,ic('logo',30,48)],[91,180,`<div style="font-weight:600;font-size:38px;line-height:42px">${ft('storylane',181)}</div>`],[1006,605,`<div style="font-weight:500;font-size:33.500px">${ft('Heliolus AI | Compliance Matchmaker',606)}</div>`],[2459,26,ic('ext',27)],[2500,217,`<div style="font-weight:500;font-size:29px;color:#5b5978">${ft('Go to Storylane',218)}</div>`]])}</div><story-frame></story-frame>`}
});
customElements.define('browser-window',class extends Base{
  render(){return `<style>:host{display:block;flex:none;height:1627px;margin-top:1px;box-sizing:border-box;border-radius:22px;overflow:hidden;background:#232323;box-shadow:0 0 0 1px #000;padding-top:3px;position:relative}
  .edge{position:absolute;inset:1px 0 0 0;border:2px solid #6b6d6a;border-width:2px 1px 0;height:238px;border-radius:22px 22px 0 0;pointer-events:none}</style>
  <tab-strip></tab-strip><tool-bar></tool-bar><bookmarks-bar></bookmarks-bar><story-page></story-page><div class="edge"></div>`}
});
customElements.define('dock-app',class extends Base{
  render(){const b=this.getAttribute('badge'),n=this.getAttribute('name'),h=+this.getAttribute('h')||72;
  return `<style>:host{display:block;position:relative;width:72px;height:110px;flex:none}.i{height:72px;margin-top:16px;display:flex;align-items:center;justify-content:center}
  .b{position:absolute;top:6px;height:36px;box-sizing:border-box;border-radius:18px;background:#e14c3f;color:#fff;font:500 22px/36px Inter,sans-serif;display:flex;justify-content:center}
  .dot{width:8px;height:8px;border-radius:50%;background:#c3c9c2;margin:11px auto 0}</style><div class="i">${ic(n,this.getAttribute('w')||72,h)}</div>${b?`<div class="b" style="left:${b.length>1?42:46}px;width:${b.length>1?42:36}px">${ft(b,b.length>1?32:14)}</div>`:''}${this.hasAttribute('open')?'<div class="dot"></div>':''}`}
});
customElements.define('dock-bar',class extends Base{
  render(){const A=[['finder',1],['launch'],['safari'],['mail'],['msg',1,'220'],['maps'],['photos'],['ft',0,'2'],['cal',1],['rem'],['notes',1],['tv'],['music'],['pod'],['news'],['pages'],['store'],['set',1],['treble'],['s'],['spot',1],['phone']],B=[['chrome',1],['replit',1],['zoom',1]],C=[['help'],['csv'],['trash']];
  const d=a=>a.map(([n,o,b])=>`<dock-app name="d_${n}" ${o?'open':''} ${b?`badge="${b}"`:''} ${n=='treble'?'h="80"':n=='csv'?'h="84"':n=='trash'?'w="70" h="80"':n=='help'?'w="72"':''}></dock-app>`).join('');
  return `<style>:host{display:flex;box-sizing:border-box;flex:none;width:2727px;height:112px;margin:2px 0 0 77px;border:1.500px solid rgba(255,255,255,.22);border-radius:34px;padding-left:15px;
  background:linear-gradient(90deg,#535d59 0,#505652 110px,#3f322d 230px,#392b25 330px,#5a592f 470px,#54532f 560px,#262630 680px,#22222f 780px,#30343b 950px,#33363d 1080px,#29252f 1200px,#35302d 1350px,#243022 1480px,#22382a 1650px,#294633 1820px,#3b3a2a 1940px,#41402f 2010px,#3c4d4c 2130px,#3f5c5e 2280px,#3b5353 2450px,#344141 2600px,#3a4444 2727px)}
  .g{display:flex;gap:22px}.v{width:2px;height:84px;background:rgba(255,255,255,.32);margin:14px 31px 0 31px}</style><div class="g">${d(A)}</div><div class="v"></div><div class="g">${d(B)}</div><div class="v"></div><div class="g" style="gap:22.500px">${d(C)}</div>`}
});
customElements.define('mac-desktop',class extends Base{
  render(){return `<style>:host{display:flex;flex-direction:column;width:2880px;height:1800px;overflow:hidden;
  background:linear-gradient(#000 1676px,rgba(0,0,0,.75) 1690px,rgba(0,0,0,.25) 1720px,transparent 1755px),linear-gradient(90deg,#8b9a94 0,#9aa6a0 130px,#5f675f 240px,#1d1512 260px,#1d1310 430px,#c5c27a 460px,#bdb96c 600px,#15182c 625px,#222b45 830px,#3c4656 1000px,#384355 1180px,#160f15 1200px,#160f10 1235px,#b9a38f 1260px,#c0a894 1460px,#16412a 1480px,#1f5136 1750px,#22401f 1980px,#5b4f3f 2010px,#5a4a38 2110px,#547a81 2140px,#517478 2400px,#5d8286 2620px,#2c2a26 2640px,#3a3a34 2740px,#5a7779 2770px,#648286 2880px)}</style>
  <menu-bar></menu-bar><browser-window></browser-window><dock-bar></dock-bar>`}
});
</script>
</body>
</html>
